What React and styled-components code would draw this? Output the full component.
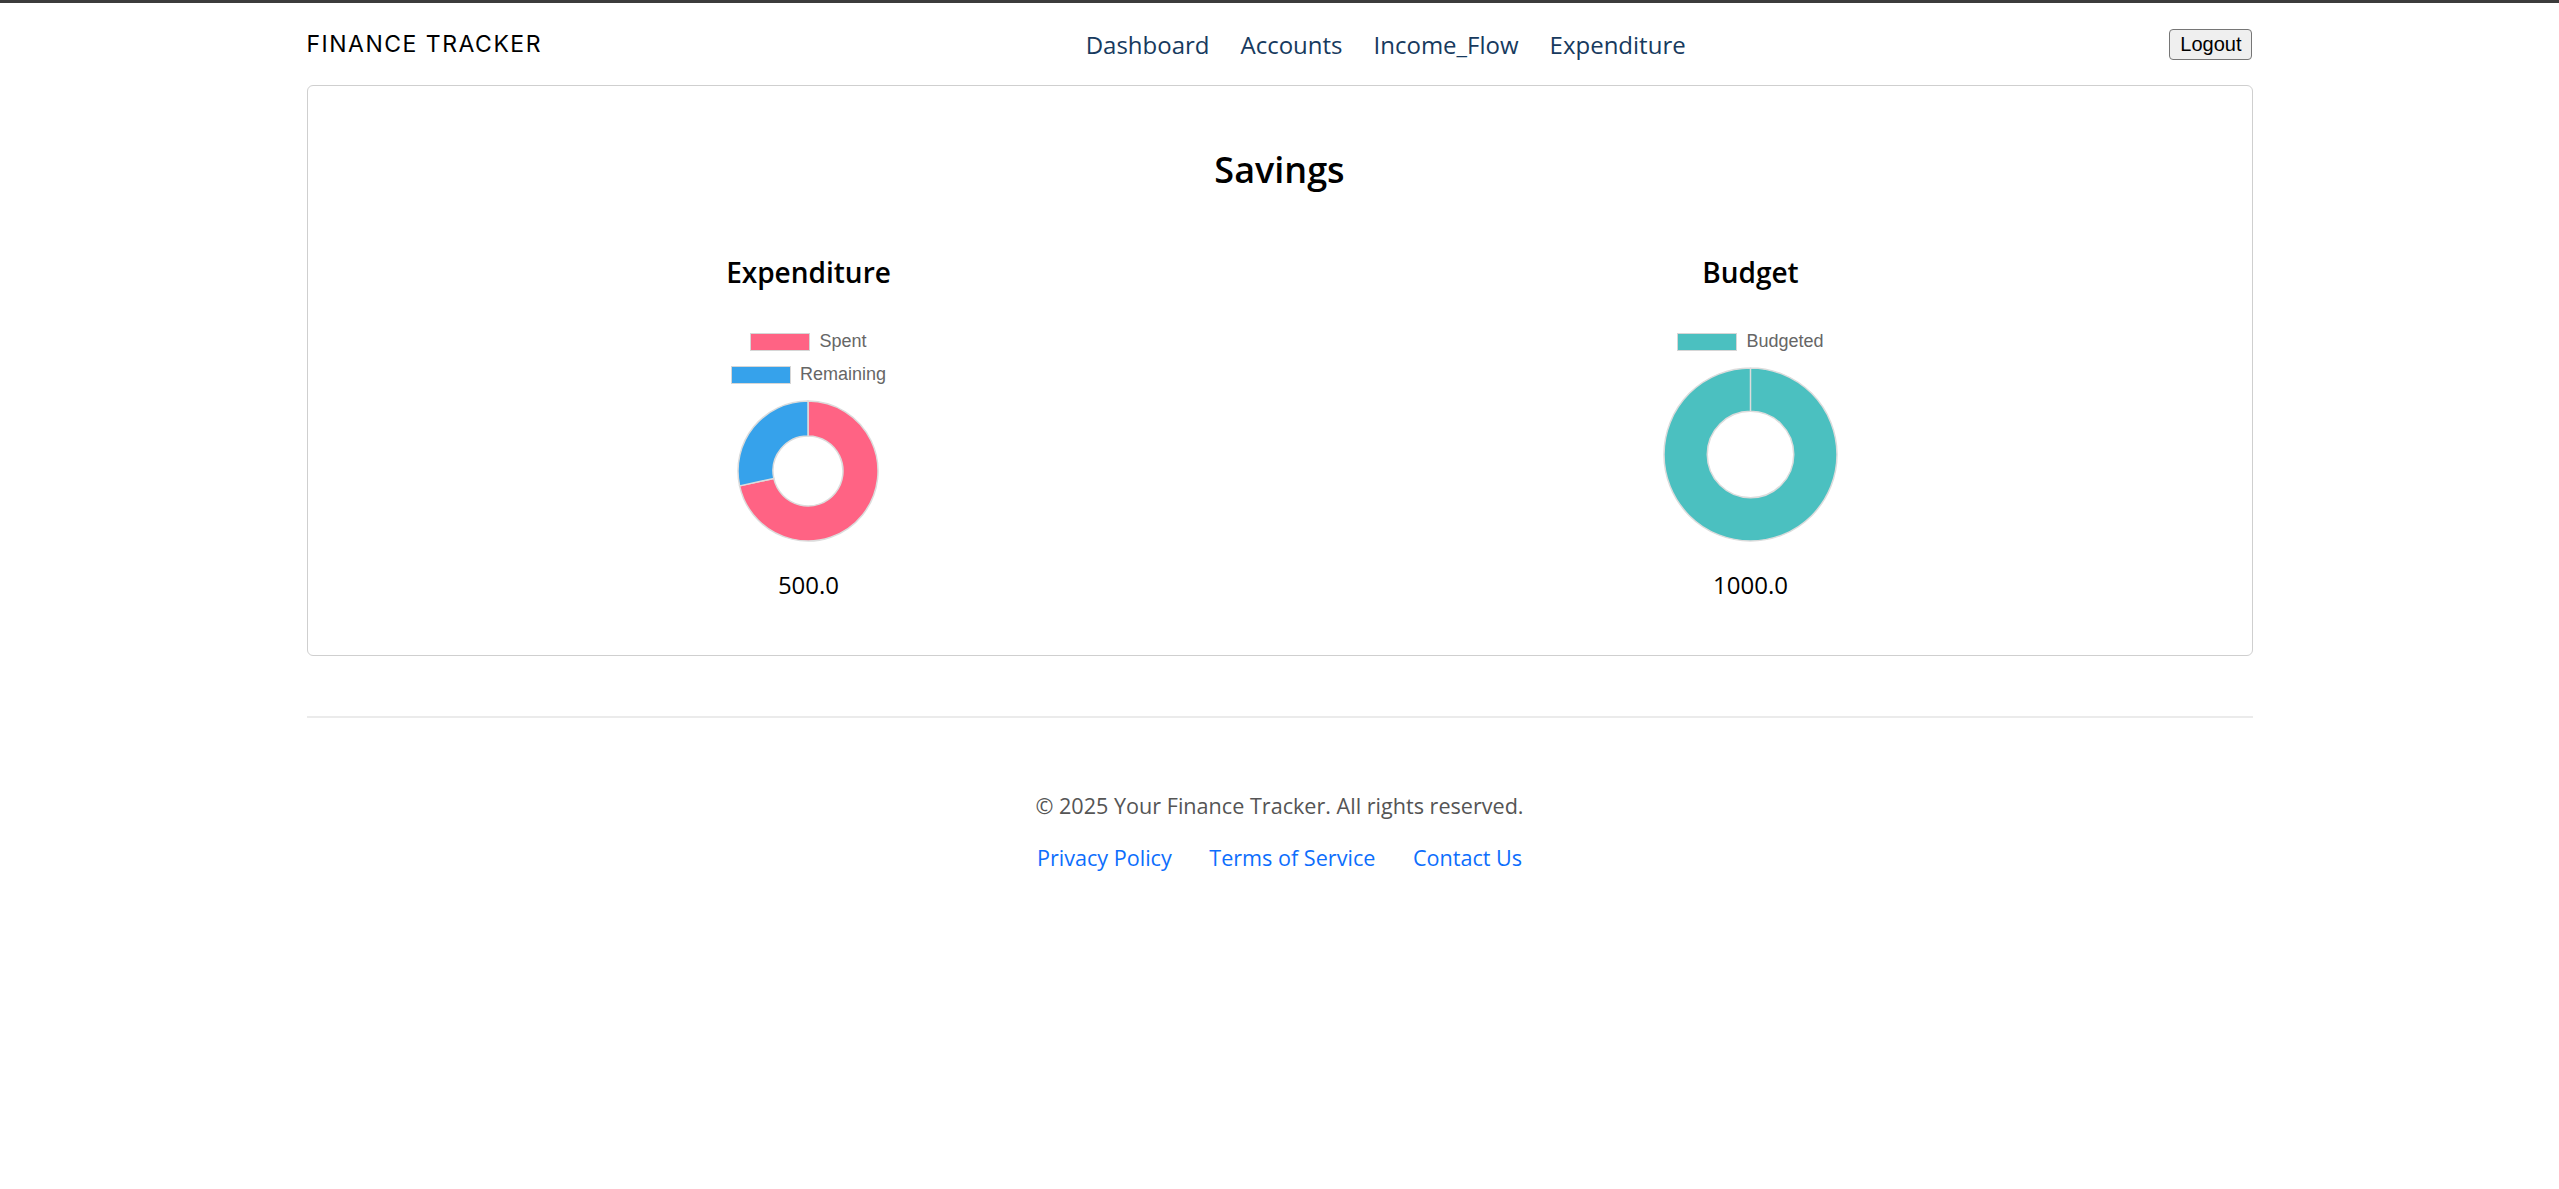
import styled, { createGlobalStyle } from "styled-components";

const GlobalStyle = createGlobalStyle`
  body {
    margin: 0;
    background: #fff;
    font-family: "Open Sans", "Liberation Sans", sans-serif;
  }
`;

const TopStripe = styled.div`
  height: 3px;
  background-color: #3c3c3c;
`;

const Container = styled.div`
  width: 1946px;
  margin: 0 auto;
`;

const Header = styled.header`
  height: 82px;
  display: flex;
  align-items: center;
  justify-content: space-between;
`;

const Brand = styled.div`
  font-family: Inter, "Liberation Sans", sans-serif;
  font-size: 23px;
  font-weight: 400;
  letter-spacing: 1.5px;
  color: #000;
`;

const NavList = styled.ul`
  display: flex;
  list-style: none;
  margin: 0;
  padding: 0 0 0 60px;
`;

const NavLink = styled.a`
  display: block;
  padding: 0 15.5px;
  font-size: 24px;
  color: #173a5e;
  text-decoration: none;
`;

const LogoutButton = styled.button`
  font-family: "Liberation Sans", Arial, sans-serif;
  font-size: 20px;
  line-height: 26px;
  padding: 1.5px 10px;
  color: #000;
  background-color: #efefef;
  border: 1.5px solid #767676;
  border-radius: 4px;
`;

const Card = styled.section`
  border: 1.5px solid #cfcfcf;
  border-radius: 6px;
  padding: 30px;
`;

const Title = styled.h2`
  margin: 32px 0 0;
  text-align: center;
  font-size: 36px;
  line-height: 43px;
  font-weight: 600;
  color: #000;
`;

const Columns = styled.div`
  display: grid;
  grid-template-columns: 1fr 1fr;
  margin: 64px 0 22px;
`;

const Column = styled.div`
  display: flex;
  flex-direction: column;
  align-items: center;
`;

const ChartTitle = styled.h3`
  margin: 0;
  font-size: 28px;
  line-height: 34px;
  font-weight: 600;
  color: #000;
`;

const ChartBox = styled.div`
  margin-top: 36px;
  height: 220px;
  display: flex;
  flex-direction: column;
  align-items: center;
`;

const Legend = styled.div`
  display: flex;
  flex-direction: column;
  align-items: center;
`;

const LegendRow = styled.div`
  height: 33px;
  display: flex;
  align-items: center;
  gap: 9px;
  font-family: "Liberation Sans", Arial, sans-serif;
  font-size: 18px;
  color: #666;
`;

const LegendSwatch = styled.span`
  width: 60px;
  height: 18px;
  box-sizing: border-box;
  background-color: ${(p) => p.$color};
  border: 1.5px solid #d6d6d6;
`;

const DonutSvg = styled.svg`
  margin-top: 8.5px;
  display: block;
`;

const Amount = styled.div`
  margin-top: 22px;
  font-size: 24px;
  line-height: 36px;
  color: #000;
`;

const Divider = styled.hr`
  margin: 60px 0 0;
  border: none;
  height: 1.5px;
  background-color: #ebebeb;
`;

const Footer = styled.footer`
  padding: 72px 0 40px;
  display: flex;
  flex-direction: column;
  align-items: center;
`;

const Copyright = styled.p`
  margin: 0;
  font-size: 21.6px;
  line-height: 32px;
  color: #555;
`;

const FooterLinks = styled.div`
  margin-top: 20px;
  display: flex;
`;

const FooterLink = styled.a`
  margin: 0 18.75px;
  font-size: 21.6px;
  line-height: 32px;
  color: #0d6efd;
  text-decoration: none;
`;

const CHART_H = 220;

const pt = (c, r, a) => [c + r * Math.sin(a), c - r * Math.cos(a)];

function ringPath(c, R, r, a0, a1) {
  const m = (a0 + a1) / 2;
  const [x0, y0] = pt(c, R, a0);
  const [xm, ym] = pt(c, R, m);
  const [x1, y1] = pt(c, R, a1);
  const [u1, v1] = pt(c, r, a1);
  const [um, vm] = pt(c, r, m);
  const [u0, v0] = pt(c, r, a0);
  return `M${x0} ${y0} A${R} ${R} 0 0 1 ${xm} ${ym} A${R} ${R} 0 0 1 ${x1} ${y1} L${u1} ${v1} A${r} ${r} 0 0 0 ${um} ${vm} A${r} ${r} 0 0 0 ${u0} ${v0} Z`;
}

const Doughnut = ({ data }) => {
  const size = CHART_H - data.length * 33 - 12;
  const total = data.reduce((s, d) => s + d.value, 0);
  const c = size / 2;
  const R = c - 1;
  const r = R * 0.5;
  let start = 0;
  return (
    <DonutSvg width={size} height={size} viewBox={`0 0 ${size} ${size}`}>
      {data.map((d) => {
        const end = start + (d.value / total) * Math.PI * 2;
        const path = ringPath(c, R, r, start, end);
        start = end;
        return (
          <path key={d.label} d={path} fill={d.color} stroke="#dcdcdc" strokeWidth="1.5" />
        );
      })}
    </DonutSvg>
  );
};

const ChartCard = ({ title, data, amount }) => (
  <Column>
    <ChartTitle>{title}</ChartTitle>
    <ChartBox>
      <Legend>
        {data.map((d) => (
          <LegendRow key={d.label}>
            <LegendSwatch $color={d.color} />
            {d.label}
          </LegendRow>
        ))}
      </Legend>
      <Doughnut data={data} />
    </ChartBox>
    <Amount>{amount}</Amount>
  </Column>
);

const expenditure = [
  { label: "Spent", value: 1260, color: "#ff6384" },
  { label: "Remaining", value: 500, color: "#36a2eb" },
];

const budget = [{ label: "Budgeted", value: 1000, color: "#4bc0c0" }];

const App = () => {
  return (
    <>
      <GlobalStyle />
      <TopStripe />
      <Container>
        <Header>
          <Brand>FINANCE TRACKER</Brand>
          <NavList>
            <li><NavLink href="#">Dashboard</NavLink></li>
            <li><NavLink href="#">Accounts</NavLink></li>
            <li><NavLink href="#">Income_Flow</NavLink></li>
            <li><NavLink href="#">Expenditure</NavLink></li>
          </NavList>
          <LogoutButton>Logout</LogoutButton>
        </Header>
        <Card>
          <Title>Savings</Title>
          <Columns>
            <ChartCard title="Expenditure" data={expenditure} amount="500.0" />
            <ChartCard title="Budget" data={budget} amount="1000.0" />
          </Columns>
        </Card>
        <Divider />
        <Footer>
          <Copyright>© 2025 Your Finance Tracker. All rights reserved.</Copyright>
          <FooterLinks>
            <FooterLink href="#">Privacy Policy</FooterLink>
            <FooterLink href="#">Terms of Service</FooterLink>
            <FooterLink href="#">Contact Us</FooterLink>
          </FooterLinks>
        </Footer>
      </Container>
    </>
  );
};

export default App;
